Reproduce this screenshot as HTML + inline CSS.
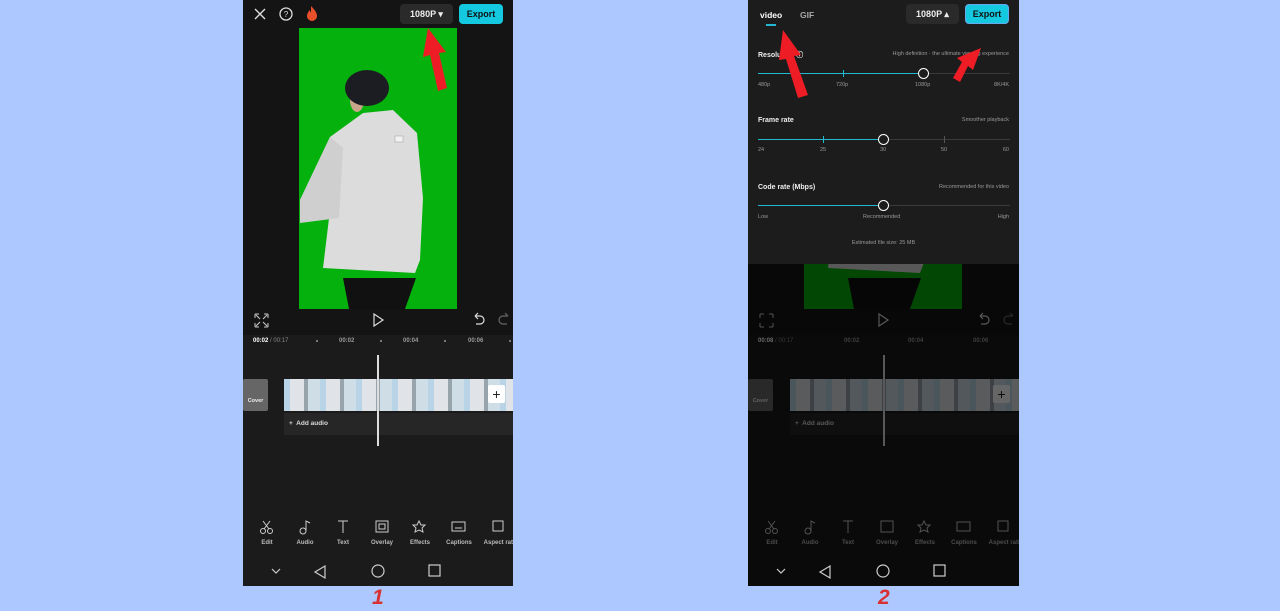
<!DOCTYPE html>
<html><head><meta charset="utf-8"><style>
*{margin:0;padding:0;box-sizing:border-box}
body{width:1280px;height:611px;background:#adc8fe;position:relative;overflow:hidden;font-family:"Liberation Sans",sans-serif;}
.ph{position:absolute;top:0;height:586px;background:#1b1b1b;overflow:hidden;color:#ddd}
.a{position:absolute}
.t{font-size:6px;color:#ccc;font-weight:bold;white-space:nowrap}
.btn{position:absolute;top:4px;height:20px;border-radius:4px;font-size:9px;font-weight:bold;display:flex;align-items:center;justify-content:center}
.lbl{position:absolute;font-size:6px;color:#bbb;transform:translateX(-50%);top:540px;font-weight:bold;white-space:nowrap}
.dim{position:absolute;left:0;top:0;width:100%;height:100%;background:rgba(0,0,0,.6)}
.panel{position:absolute;left:0;top:0;width:100%;height:264px;background:#1c1c1c}
.sl{position:absolute;left:10px;width:252px;height:1px;background:#3a3a3a}
.fill{position:absolute;left:0;top:0;height:1px;background:#22b8cf}
.th{position:absolute;top:-5px;width:11px;height:11px;border-radius:50%;border:1.5px solid #fff;background:#1c1c1c}
.tk{position:absolute;top:-3px;width:1px;height:7px;background:#22b8cf}
.sm{position:absolute;font-size:5.5px;color:#999;white-space:nowrap}
.hd{position:absolute;font-size:7px;color:#eee;font-weight:bold;left:10px}
.num{position:absolute;top:586px;font-size:21px;font-weight:bold;font-style:italic;color:#d93030}
</style></head><body>

<div class="ph" style="left:243px;width:270px">
 <div class="a" style="left:0;top:0;width:270px;height:335px;background:#141414"></div>
 <svg class="a" style="left:0;top:0" width="270" height="30">
  <path d="M12 9l10 10M22 9l-10 10" stroke="#ddd" stroke-width="1.4"/>
  <circle cx="43" cy="14" r="6" stroke="#ddd" stroke-width="1.3" fill="none"/>
  <text x="43" y="17" font-size="8" fill="#ddd" text-anchor="middle" font-family="Liberation Sans">?</text>
  <path d="M68 6c4 4 6 7 6 10a5 5 0 0 1-10 0c0-3 2-4 2-6 1 1 2 2 2 3 0-2 0-5 0-7z" fill="#e8502b"/>
 </svg>
 <div class="btn" style="left:157px;width:53px;background:#2a2a2a;color:#eee">1080P ▾</div>
 <div class="btn" style="left:216px;width:44px;background:#14c8e0;color:#111">Export</div>
 <div class="a" style="left:56px;top:28px;width:158px;height:281px;background:#05b10c">
  <svg width="158" height="281">
   <polygon points="44,250 117,250 106,281 50,281" fill="#111"/>
   <polygon points="64,85 94,82 118,105 124,170 121,232 116,245 24,240 31,182 1,195 1,172 31,109" fill="#dcdcdc"/>
   <polygon points="31,109 44,120 40,190 1,195 1,172" fill="#cfcfcf"/>
   <rect x="96" y="108" width="8" height="6" fill="#f2f2f2" stroke="#999" stroke-width=".5"/>
   <ellipse cx="58" cy="72" rx="7" ry="12" fill="#c9a58a"/>
   <ellipse cx="68" cy="60" rx="22" ry="18" fill="#1b1d22"/>
  </svg>
 </div>
 <svg class="a" style="left:0;top:308px" width="270" height="24">
  <path d="M12 6v4M12 6h4M25 6h-4M25 6v4M12 19v-4M12 19h4M25 19h-4M25 19v-4M13 7l4 4M24 7l-4 4M13 18l4-4M24 18l-4-4" stroke="#ccc" stroke-width="1" fill="none"/>
  <path d="M131 6l9 6-9 6z" stroke="#ddd" stroke-width="1.2" fill="none"/>
  <path d="M232 8h5a4 4 0 0 1 0 8h-4M232 8l3-3M232 8l3 3" stroke="#ddd" stroke-width="1.2" fill="none"/>
  <path d="M265 8h-5a4 4 0 0 0 0 8h4M265 8l-3-3" stroke="#666" stroke-width="1.2" fill="none"/>
 </svg>
 <div class="a" style="left:0;top:335px;width:270px;height:251px;background:#1b1b1b"></div>
 <div class="t a" style="left:10px;top:338px"><span style="color:#fff">00:02</span> <span style="color:#888;font-weight:normal">/ 00:17</span></div>
 <div class="t a" style="left:96px;top:338px;color:#999">00:02</div>
 <div class="t a" style="left:160px;top:338px;color:#999">00:04</div>
 <div class="t a" style="left:225px;top:338px;color:#999">00:06</div>
 <div class="a" style="left:73px;top:340px;width:2px;height:2px;background:#777"></div>
 <div class="a" style="left:137px;top:340px;width:2px;height:2px;background:#777"></div>
 <div class="a" style="left:201px;top:340px;width:2px;height:2px;background:#777"></div>
 <div class="a" style="left:266px;top:340px;width:2px;height:2px;background:#777"></div>
 <div class="a" style="left:0;top:379px;width:25px;height:32px;background:#666;border-radius:2px;font-size:5.5px;color:#eee;text-align:center;padding-top:19px;font-weight:bold">Cover</div>
 <div class="a" style="left:41px;top:379px;width:229px;height:32px;background:repeating-linear-gradient(90deg,#b8d4e6 0 6px,#e0e4e8 6px 20px,#98a4ac 20px 24px,#cfdde6 24px 36px)"></div>
 <div class="a" style="left:245px;top:385px;width:17px;height:18px;background:#fff;border-radius:2px;color:#222;font-size:14px;text-align:center;line-height:18px">+</div>
 <div class="a" style="left:41px;top:413px;width:229px;height:22px;background:#262626;font-size:6.5px;color:#ddd;padding:7px 0 0 5px;font-weight:bold">+&nbsp; Add audio</div>
 <div class="a" style="left:134px;top:355px;width:2px;height:91px;background:#ddd"></div>
 <svg class="a" style="left:0;top:518px" width="270" height="18">
  <g stroke="#ccc" stroke-width="1" fill="none">
   <circle cx="20" cy="13" r="2.5"/><circle cx="27" cy="13" r="2.5"/><path d="M21 11l6-8M26 11l-6-8"/>
   <circle cx="60" cy="13" r="3"/><path d="M63 13V3l4 2"/>
   <path d="M95 3h10M100 3v12"/>
   <rect x="133" y="3" width="12" height="11"/><rect x="136" y="6" width="6" height="5"/>
   <path d="M176 3l2 4 4 0-3 3 1 4-4-2-4 2 1-4-3-3 4 0z"/>
   <rect x="209" y="4" width="13" height="9"/><path d="M212 10h7"/>
   <rect x="250" y="3" width="10" height="10"/>
  </g>
 </svg>
 <div class="lbl" style="left:24px">Edit</div><div class="lbl" style="left:62px">Audio</div><div class="lbl" style="left:100px">Text</div><div class="lbl" style="left:139px">Overlay</div><div class="lbl" style="left:177px">Effects</div><div class="lbl" style="left:216px">Captions</div><div class="lbl" style="left:258px">Aspect ratio</div>
 <svg class="a" style="left:0;top:560px" width="270" height="22">
  <g stroke="#ccc" stroke-width="1.2" fill="none">
   <path d="M29 9l4 4 4-4"/><path d="M82 6l-10 6 10 6z"/><circle cx="135" cy="11" r="6"/><rect x="186" y="5" width="11" height="11"/>
  </g>
 </svg>
</div>

<div class="ph" style="left:748px;width:271px">
 <div class="a" style="left:0;top:0;width:271px;height:335px;background:#141414"></div>
 <div class="a" style="left:56px;top:28px;width:158px;height:281px;background:#05b10c">
  <svg width="158" height="281">
   <polygon points="44,250 117,250 106,281 50,281" fill="#111"/>
   <polygon points="64,85 94,82 118,105 124,170 121,232 116,245 24,240 31,182 1,195 1,172 31,109" fill="#dcdcdc"/>
  </svg>
 </div>
 <svg class="a" style="left:0;top:308px" width="270" height="24">
  <path d="M12 6v4M12 6h4M25 6h-4M25 6v4M12 19v-4M12 19h4M25 19h-4M25 19v-4" stroke="#ccc" stroke-width="1" fill="none"/>
  <path d="M131 6l9 6-9 6z" stroke="#ddd" stroke-width="1.2" fill="none"/>
  <path d="M232 8h5a4 4 0 0 1 0 8h-4M232 8l3-3M232 8l3 3" stroke="#ddd" stroke-width="1.2" fill="none"/>
  <path d="M265 8h-5a4 4 0 0 0 0 8h4M265 8l-3-3" stroke="#666" stroke-width="1.2" fill="none"/>
 </svg>
 <div class="t a" style="left:10px;top:338px"><span style="color:#fff">00:08</span> <span style="color:#888;font-weight:normal">/ 00:17</span></div>
 <div class="t a" style="left:96px;top:338px;color:#999">00:02</div>
 <div class="t a" style="left:160px;top:338px;color:#999">00:04</div>
 <div class="t a" style="left:225px;top:338px;color:#999">00:06</div>
 <div class="a" style="left:0;top:379px;width:25px;height:32px;background:#666;border-radius:2px;font-size:5.5px;color:#eee;text-align:center;padding-top:19px;font-weight:bold">Cover</div>
 <div class="a" style="left:42px;top:379px;width:229px;height:32px;background:repeating-linear-gradient(90deg,#b8d4e6 0 6px,#e0e4e8 6px 20px,#98a4ac 20px 24px,#cfdde6 24px 36px)"></div>
 <div class="a" style="left:245px;top:385px;width:17px;height:18px;background:#fff;border-radius:2px;color:#222;font-size:14px;text-align:center;line-height:18px">+</div>
 <div class="a" style="left:42px;top:413px;width:229px;height:22px;background:#262626;font-size:6.5px;color:#ddd;padding:7px 0 0 5px;font-weight:bold">+&nbsp; Add audio</div>
 <div class="a" style="left:135px;top:355px;width:2px;height:91px;background:#ddd"></div>
 <svg class="a" style="left:0;top:518px" width="270" height="18">
  <g stroke="#ccc" stroke-width="1" fill="none">
   <circle cx="20" cy="13" r="2.5"/><circle cx="27" cy="13" r="2.5"/><path d="M21 11l6-8M26 11l-6-8"/>
   <circle cx="60" cy="13" r="3"/><path d="M63 13V3l4 2"/>
   <path d="M95 3h10M100 3v12"/>
   <rect x="133" y="3" width="12" height="11"/>
   <path d="M176 3l2 4 4 0-3 3 1 4-4-2-4 2 1-4-3-3 4 0z"/>
   <rect x="209" y="4" width="13" height="9"/>
   <rect x="250" y="3" width="10" height="10"/>
  </g>
 </svg>
 <div class="lbl" style="left:24px">Edit</div><div class="lbl" style="left:62px">Audio</div><div class="lbl" style="left:100px">Text</div><div class="lbl" style="left:139px">Overlay</div><div class="lbl" style="left:177px">Effects</div><div class="lbl" style="left:216px">Captions</div><div class="lbl" style="left:258px">Aspect ratio</div>
 <div class="dim"></div>
 <svg class="a" style="left:0;top:560px" width="270" height="22">
  <g stroke="#ccc" stroke-width="1.2" fill="none">
   <path d="M29 9l4 4 4-4"/><path d="M82 6l-10 6 10 6z"/><circle cx="135" cy="11" r="6"/><rect x="186" y="5" width="11" height="11"/>
  </g>
 </svg>
 <div class="panel">
  <div class="a" style="left:12px;top:10px;font-size:8.5px;font-weight:bold;color:#fff">video</div>
  <div class="a" style="left:18px;top:24px;width:10px;height:1.5px;background:#22b8cf"></div>
  <div class="a" style="left:52px;top:10px;font-size:8.5px;font-weight:bold;color:#aaa">GIF</div>
  <div class="btn" style="left:158px;width:53px;background:#2a2a2a;color:#eee">1080P ▴</div>
  <div class="btn" style="left:217px;width:44px;background:#14c8e0;color:#111;border:1px solid #6ae">Export</div>
  <div class="hd" style="top:50px">Resolution ⓘ</div>
  <div class="sm" style="right:10px;top:51px">High definition · the ultimate viewing experience</div>
  <div class="sl" style="top:73px"><div class="fill" style="width:166px"></div><div class="tk" style="left:85px"></div><div class="th" style="left:160px"></div></div>
  <div class="sm" style="left:10px;top:82px">480p</div><div class="sm" style="left:88px;top:82px">720p</div><div class="sm" style="left:167px;top:82px">1080p</div><div class="sm" style="right:10px;top:82px">8K/4K</div>
  <div class="hd" style="top:117px">Frame rate</div>
  <div class="sm" style="right:10px;top:117px">Smoother playback</div>
  <div class="sl" style="top:139px"><div class="fill" style="width:125px"></div><div class="tk" style="left:65px"></div><div class="tk" style="left:186px;background:#555"></div><div class="th" style="left:120px"></div></div>
  <div class="sm" style="left:10px;top:147px">24</div><div class="sm" style="left:72px;top:147px">25</div><div class="sm" style="left:132px;top:147px">30</div><div class="sm" style="left:193px;top:147px">50</div><div class="sm" style="right:10px;top:147px">60</div>
  <div class="hd" style="top:184px">Code rate (Mbps)</div>
  <div class="sm" style="right:10px;top:184px">Recommended for this video</div>
  <div class="sl" style="top:205px"><div class="fill" style="width:125px"></div><div class="th" style="left:120px"></div></div>
  <div class="sm" style="left:10px;top:214px">Low</div><div class="sm" style="left:115px;top:214px">Recommended</div><div class="sm" style="right:10px;top:214px">High</div>
  <div class="sm" style="left:0;width:271px;text-align:center;top:240px">Estimated file size: 25 MB</div>
 </div>
</div>

<svg class="a" style="left:0;top:0" width="1280" height="611">
 <g fill="#ee1c25">
  <polygon points="428,28 446,52 439,53 447,88 438,91 430,55 423,57"/>
  <polygon points="783,30 801,55 794,56 808,95 798,98 786,59 779,60"/>
  <polygon points="981,48 973,70 968,66 960,82 953,78 962,62 957,58"/>
 </g>
</svg>
<div class="num" style="left:372px">1</div>
<div class="num" style="left:878px">2</div>
</body></html>
